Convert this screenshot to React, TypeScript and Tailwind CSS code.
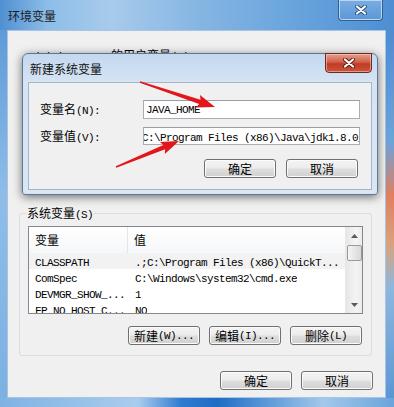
import React from 'react'

const CJK = /([\u3000-\u9fff\uff00-\uffef]+)/

// mixed text: CJK in Noto, ASCII in a 6px-wide mono like SimSun
function Txt({ s }: { s: string }) {
  return (
    <>
      {s
        .split(CJK)
        .filter(Boolean)
        .map((p, i) =>
          CJK.test(p) ? (
            <span key={i} className="font-['Noto_Sans_CJK_SC',sans-serif] text-[12px]">
              {p}
            </span>
          ) : (
            <span key={i} className="font-['Liberation_Mono',monospace] text-[11px] tracking-[-0.6px]">
              {p}
            </span>
          )
        )}
    </>
  )
}

function Btn({ label }: { label: string }) {
  return (
    <div className="w-[72px] h-[19px] rounded-[3px] border border-[#707070] bg-[linear-gradient(180deg,#f4f4f4_0%,#ececec_48%,#dedede_52%,#d0d0d0_100%)] shadow-[inset_0_0_0_1px_#fbfbfb] flex items-center justify-center leading-[14px] text-black">
      <Txt s={label} />
    </div>
  )
}

function CloseX({ shadow }: { shadow: string }) {
  return (
    <svg width="12" height="10" viewBox="0 0 12 10">
      <path d="M2 1.5 L10 8.5 M10 1.5 L2 8.5" stroke={shadow} strokeWidth="4" strokeLinecap="round" fill="none" />
      <path d="M2 1.5 L10 8.5 M10 1.5 L2 8.5" stroke="#ffffff" strokeWidth="2.2" strokeLinecap="round" fill="none" />
    </svg>
  )
}

function arrowPts(sx: number, sy: number, tx: number, ty: number, hl = 16, hw = 6.5, w0 = 1.5, w1 = 4.5) {
  const dx = tx - sx
  const dy = ty - sy
  const L = Math.hypot(dx, dy)
  const ux = dx / L
  const uy = dy / L
  const nx = -uy
  const ny = ux
  const bx = tx - ux * hl
  const by = ty - uy * hl
  const p = (x: number, y: number) => `${x.toFixed(1)},${y.toFixed(1)}`
  return [
    p(sx + (nx * w0) / 2, sy + (ny * w0) / 2),
    p(bx + (nx * w1) / 2, by + (ny * w1) / 2),
    p(bx - ux * 2 + nx * hw, by - uy * 2 + ny * hw),
    p(tx, ty),
    p(bx - ux * 2 - nx * hw, by - uy * 2 - ny * hw),
    p(bx - (nx * w1) / 2, by - (ny * w1) / 2),
    p(sx - (nx * w0) / 2, sy - (ny * w0) / 2),
  ].join(' ')
}

const rows = [
  ['CLASSPATH', '.;C:\\Program Files (x86)\\QuickT...'],
  ['ComSpec', 'C:\\Windows\\system32\\cmd.exe'],
  ['DEVMGR_SHOW_...', '1'],
  ['FP_NO_HOST_C...', 'NO'],
]

export default function App() {
  return (
    <div className="w-[394px] h-[407px] relative overflow-hidden flex flex-col bg-[linear-gradient(90deg,#4f8fd1_0%,#8dbde8_12%,#a8cbeb_28%,#86b6e3_50%,#6ca6de_72%,#4e8ed2_100%)] select-none">
      {/* outer title bar */}
      <div className="h-[30px] flex items-start shrink-0">
        <span className="ml-[8px] mt-[8px] leading-[14px] text-[#1b1b1b]">
          <Txt s="环境变量" />
        </span>
        <div className="ml-auto mr-[11px] w-[45px] h-[21px] rounded-b-[4px] border border-t-0 border-[#2f5f93] shadow-[inset_0_0_0_1px_#b9d6f2] bg-[linear-gradient(180deg,#7aaee2,#5b97d6)] flex items-center justify-center">
          <CloseX shadow="#27507e" />
        </div>
      </div>

      <div className="flex h-[368px] shrink-0">
        <div className="w-[7px] bg-[linear-gradient(180deg,#5e9bd8,#8fbde8_45%,#7cb1e2_100%)]" />
        {/* outer client */}
        <div className="w-[379px] h-[368px] border border-[#a9c4e2] bg-[#f0f0f0] leading-[14px] text-black">
          {/* user variables group, mostly under the dialog: only its top edge shows */}
          <div className="pt-[16px] pl-[19px] h-[30px]">
            <div className="h-[6px] overflow-hidden whitespace-nowrap">
              <Txt s="Administrator 的用户变量(U)" />
            </div>
          </div>

          <fieldset className="mt-[144px] ml-[11px] w-[353px] border border-[#d5dfe5] rounded-[3px] px-[8px] pt-[4px] pb-[10px]">
            <legend className="-ml-[2px] px-[1px] leading-[14px]">
              <Txt s="系统变量(S)" />
            </legend>

            <div className="w-[335px] h-[88px] border border-[#828790] bg-white flex overflow-hidden">
              <div className="w-[316px] flex flex-col">
                <div className="h-[26px] flex shrink-0 bg-[linear-gradient(180deg,#ffffff,#f6f7f9)]">
                  <div className="w-[99px] h-full border-r border-[#e3e6ea] pl-[6px] flex items-center">
                    <Txt s="变量" />
                  </div>
                  <div className="pl-[6px] flex items-center">
                    <Txt s="值" />
                  </div>
                </div>
                {rows.map((r, i) => (
                  <div
                    key={r[0]}
                    className={
                      i === 0
                        ? 'h-[16px] flex items-center shrink-0 bg-[#f2f2f2] whitespace-nowrap'
                        : 'h-[16px] flex items-center shrink-0 whitespace-nowrap'
                    }
                  >
                    <div className="w-[99px] pl-[6px] overflow-hidden">
                      <Txt s={r[0]} />
                    </div>
                    <div className="pl-[7px] overflow-hidden">
                      <Txt s={r[1]} />
                    </div>
                  </div>
                ))}
              </div>
              {/* scrollbar */}
              <div className="w-[17px] h-full flex flex-col items-center border-l border-[#e8e8e8] bg-[linear-gradient(90deg,#e6e6e6,#f4f4f4_60%,#ececec)]">
                <div className="h-[17px] flex items-center justify-center">
                  <svg width="7" height="4" viewBox="0 0 7 4">
                    <path d="M3.5 0 L7 4 L0 4 Z" fill="#5a5a5a" />
                  </svg>
                </div>
                <div className="w-[15px] h-[16px] mt-[1px] rounded-[2px] border border-[#9a9a9a] bg-[linear-gradient(90deg,#f4f4f4,#e6e6e6_50%,#d8d8d8)]" />
                <div className="mt-auto h-[17px] flex items-center justify-center">
                  <svg width="7" height="4" viewBox="0 0 7 4">
                    <path d="M0 0 L7 0 L3.5 4 Z" fill="#5a5a5a" />
                  </svg>
                </div>
              </div>
            </div>

            <div className="mt-[12px] pr-[1px] flex justify-end gap-[9px]">
              <Btn label="新建(W)..." />
              <Btn label="编辑(I)..." />
              <Btn label="删除(L)" />
            </div>
          </fieldset>

          <div className="mt-[15px] pr-[12px] flex justify-end gap-[9px]">
            <Btn label="确定" />
            <Btn label="取消" />
          </div>
        </div>
        <div className="w-[8px] bg-[linear-gradient(180deg,#4d8dd1_0%,#6aa4dc_30%,#e0805e_45%,#d9a27c_58%,#8fb7dc_70%,#5b97d6_100%)]" />
      </div>
      <div className="h-[9px] shrink-0 bg-[linear-gradient(90deg,#7fb2e3_0%,#a9cdee_35%,#2f7bd0_46%,#1e6cc4_55%,#5d9ad8_68%,#a3c8eb_82%,#6aa4dc_100%)]" />

      {/* new system variable dialog, over the window */}
      <div className="absolute left-[22px] top-[53px] w-[356px] h-[142px] rounded-t-[6px] rounded-b-[3px] border border-[#5a7796] bg-[linear-gradient(180deg,#c3d8ef_0%,#d6e4f3_20%,#dae6f4_100%)] shadow-[0_2px_10px_rgba(0,0,0,0.55)]">
        <div className="h-[28px] pl-[7px] pt-[7px] leading-[14px] text-[#111]">
          <Txt s="新建系统变量" />
        </div>
        <div className="absolute top-[-1px] right-[5px] w-[47px] h-[20px] rounded-b-[4px] border border-[#6b2a22] bg-[linear-gradient(180deg,#e4a08c_0%,#d0604a_45%,#bf3b25_55%,#c9563e_100%)] shadow-[inset_0_0_0_1px_rgba(255,220,210,0.5)] flex items-center justify-center">
          <CloseX shadow="#5e1a10" />
        </div>
        <div className="ml-[5px] w-[344px] h-[108px] border border-[#a3b6cb] bg-[#f0f0f0] pt-[17px] pl-[11px] leading-[14px] text-black">
          <div className="h-[19px] flex items-center">
            <div className="w-[103px]">
              <Txt s="变量名(N):" />
            </div>
            <div className="w-[217px] h-[19px] border border-[#abadb3] border-t-[#9a9da4] bg-white pl-[2px] flex items-center overflow-hidden whitespace-nowrap">
              <Txt s="JAVA_HOME" />
            </div>
          </div>
          <div className="mt-[8px] h-[18px] flex items-center">
            <div className="w-[103px]">
              <Txt s="变量值(V):" />
            </div>
            <div className="w-[217px] h-[18px] border border-[#abadb3] border-t-[#9a9da4] bg-white flex items-center overflow-hidden whitespace-nowrap">
              <span className="-ml-[2px]">
                <Txt s="C:\Program Files (x86)\Java\jdk1.8.0_181" />
              </span>
            </div>
          </div>
          <div className="mt-[14px] pr-[13px] flex justify-end gap-[10px]">
            <Btn label="确定" />
            <Btn label="取消" />
          </div>
        </div>
      </div>

      {/* red annotation arrows */}
      <svg className="absolute left-0 top-0 pointer-events-none" width="394" height="407" viewBox="0 0 394 407">
        <polygon points={arrowPts(140, 82, 215, 107)} fill="#e3161b" />
        <polygon points={arrowPts(116, 167, 179, 141)} fill="#e3161b" />
      </svg>
    </div>
  )
}
